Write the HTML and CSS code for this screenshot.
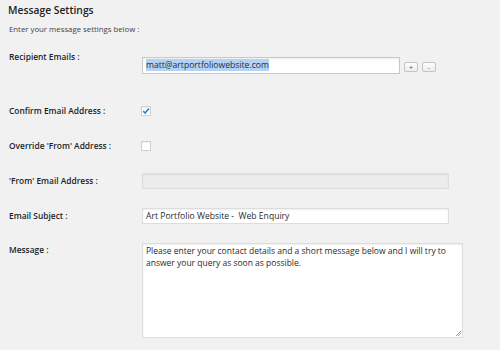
FILE: index.html
```html
<!DOCTYPE html>
<html lang="en">
<head>
    <meta charset="UTF-8">
    <meta name="viewport" content="width=device-width, initial-scale=1.0">
    <title>Message Settings</title>
    <link rel="stylesheet" href="styles.css">
</head>
<body>
    <h2 class="title">Message Settings</h2>
    <p class="intro">Enter your message settings below :</p>

    <div class="form">
        <div class="row row-recipient">
            <label class="label">Recipient Emails :</label>
            <div class="field field-inline">
                <div class="input input-email"><span class="selected">matt@artportfoliowebsite.com</span></div>
                <button class="mini-btn">+</button>
                <button class="mini-btn">-</button>
            </div>
        </div>

        <div class="row">
            <label class="label">Confirm Email Address :</label>
            <span class="checkbox">
                <svg width="8" height="8" viewBox="0 0 8 8">
                    <path d="M1.2 4.2 L3.1 6 L6.9 1.6" fill="none" stroke="#1e8cbe" stroke-width="1.6"/>
                </svg>
            </span>
        </div>

        <div class="row">
            <label class="label">Override 'From' Address :</label>
            <span class="checkbox"></span>
        </div>

        <div class="row">
            <label class="label">'From' Email Address :</label>
            <div class="input input-wide input-disabled"></div>
        </div>

        <div class="row">
            <label class="label">Email Subject :</label>
            <div class="input input-wide">Art Portfolio Website -&nbsp; Web Enquiry</div>
        </div>

        <div class="row row-message">
            <label class="label">Message :</label>
            <div class="textarea">Please enter your contact details and a short message below and I will try to answer your query as soon as possible.<span class="grip"></span></div>
        </div>
    </div>
</body>
</html>
```

FILE: styles.css
```css
body {
    margin: 0;
    padding: 0 8px;
    background-color: #f1f1f1;
    font-family: 'Open Sans', 'Noto Sans', sans-serif;
    color: #333;
    overflow: hidden;
}

.title {
    margin: 0;
    font-size: 10.3px;
    font-weight: 600;
    line-height: 20px;
    color: #222;
}

.intro {
    margin: 2px 0 0 1px;
    font-size: 7.8px;
    line-height: 14px;
    color: #444;
}

.form {
    margin-top: 13px;
}

.row {
    display: flex;
    align-items: center;
    height: 35px;
}

.label {
    width: 133px;
    flex-shrink: 0;
    padding-left: 1px;
    font-size: 8.4px;
    font-weight: 600;
    line-height: 16px;
    color: #1e1e1e;
}

.row-recipient {
    align-items: flex-start;
    height: 44px;
}

.row-recipient .field {
    margin-top: 8px;
}

.field-inline {
    display: flex;
    align-items: flex-end;
    gap: 4px;
}

.input {
    box-sizing: border-box;
    height: 17px;
    padding: 0 3px;
    border: 1px solid #ddd;
    background-color: #fff;
    box-shadow: inset 0 1px 2px rgba(0, 0, 0, 0.07);
    font-size: 8.6px;
    line-height: 15px;
    color: #2a2a2a;
    white-space: nowrap;
}

.input-email {
    width: 258px;
    border-color: #c8c8c8;
}

.selected {
    background-color: #b4d2f6;
}

.input-wide {
    width: 307px;
    height: 16px;
    line-height: 14px;
}

.input-disabled {
    background-color: #ececec;
}

.mini-btn {
    box-sizing: border-box;
    width: 14px;
    height: 10px;
    margin-bottom: 2px;
    padding: 0;
    border: 1px solid #c4c4c4;
    border-radius: 2px;
    background: linear-gradient(#fdfdfd, #ededed);
    font-family: 'Open Sans', sans-serif;
    font-size: 7px;
    line-height: 7px;
    color: #555;
}

.checkbox {
    box-sizing: border-box;
    display: flex;
    justify-content: center;
    align-items: center;
    width: 10px;
    height: 10px;
    margin-left: -1px;
    border: 1px solid #cfcfcf;
    background-color: #fff;
    box-shadow: inset 0 1px 1px rgba(0, 0, 0, 0.06);
}

.row-message {
    align-items: flex-start;
    height: auto;
}

.row-message .label {
    margin-top: 9px;
}

.textarea {
    position: relative;
    box-sizing: border-box;
    width: 321px;
    height: 95px;
    margin-top: 10px;
    padding: 1px 3px;
    border: 1px solid #ddd;
    background-color: #fff;
    box-shadow: inset 0 1px 2px rgba(0, 0, 0, 0.07);
    font-size: 8.5px;
    line-height: 11.5px;
    color: #2a2a2a;
}

.grip {
    position: absolute;
    right: 1px;
    bottom: 1px;
    width: 5px;
    height: 5px;
    background: linear-gradient(135deg, transparent 45%, #999 45%, #999 55%, transparent 55%, transparent 70%, #999 70%, #999 80%, transparent 80%);
}
```
